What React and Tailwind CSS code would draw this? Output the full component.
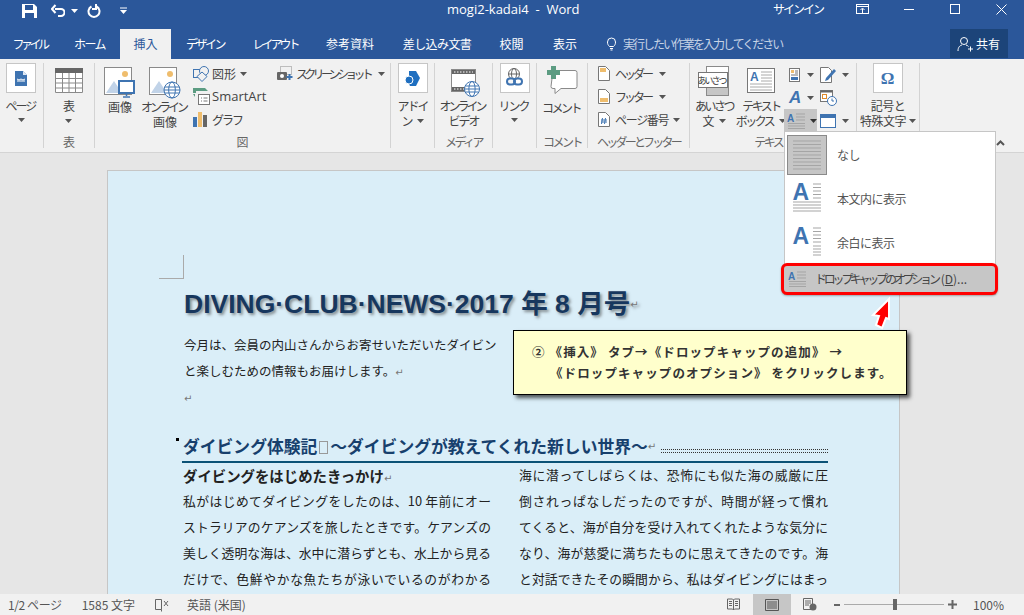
import React from 'react';

const JP = { fontFamily: '"Noto Sans CJK JP", "Noto Sans", sans-serif' };

const Caret = ({ className = '', color = '#555' }) => (
  <svg width="7" height="4" viewBox="0 0 7 4" className={`inline-block shrink-0 ${className}`}>
    <polygon points="0,0 7,0 3.5,4" fill={color} />
  </svg>
);

const Group = ({ w, label, children, labelClass = '' }) => (
  <div className="flex flex-col h-[85px] mt-[4px] border-r border-[#d3d3d3] shrink-0" style={{ width: w }}>
    <div className="flex-1 min-h-0 flex">{children}</div>
    <div className={`h-[20px] pt-[7px] text-center text-[12px] leading-[14px] text-[#666] whitespace-nowrap ${labelClass}`}>{label}</div>
  </div>
);

const Boxed = ({ children }) => (
  <div className="w-[30px] h-[30px] bg-white border border-[#c6c6c6] flex items-center justify-center">{children}</div>
);

// large ribbon button: icon block, then text lines
const Big = ({ w, h = 35, icon, children, className = '' }) => (
  <div className={`flex flex-col items-center shrink-0 ${className}`} style={{ width: w }}>
    <div className="flex justify-center items-start" style={{ height: h }}>{icon}</div>
    <div className="flex flex-col items-center text-[12px] leading-[15px] text-[#444] whitespace-nowrap">{children}</div>
  </div>
);

const Row = ({ icon, children, className = '' }) => (
  <div className={`h-[23px] flex items-center text-[12px] text-[#444] whitespace-nowrap ${className}`}>
    {icon}
    {children}
  </div>
);

const PageDoc = () => (
  <svg width="12" height="15" viewBox="0 0 12 15">
    <path d="M0 0h8l4 4v11H0z" fill="#3f74b1" />
    <path d="M8 0l4 4H8z" fill="#dfe8f3" />
    <path d="M2 10h8M2 8l2 1 2-1 2 1 2-1" stroke="#fff" strokeWidth="1" fill="none" />
  </svg>
);

const TableIcon = () => (
  <svg width="28" height="25" viewBox="0 0 28 25">
    <rect width="28" height="25" fill="#fff" />
    <rect width="28" height="5" fill="#666" />
    <path d="M.5 5v19.5h27V5M.5 10.5h27M.5 15h27M.5 20h27M7.5 5v20M14 5v20M20.5 5v20" stroke="#8a8a8a" fill="none" />
  </svg>
);

const PictureBase = () => (
  <>
    <rect x=".5" y=".5" width="27" height="27" fill="#fff" stroke="#8a8a8a" />
    <circle cx="21" cy="7" r="3" fill="#efbd6d" />
    <path d="M2 26l8-12 8 12z" fill="#c1d3e8" />
  </>
);

const PictureIcon = () => (
  <svg width="32" height="32" viewBox="0 0 32 32">
    <PictureBase />
    <rect x="15" y="14" width="15" height="12" fill="#fff" stroke="#3f74b1" strokeWidth="2" />
    <path d="M22.5 26v3M19 30h7" stroke="#3f74b1" strokeWidth="1.5" />
  </svg>
);

const Globe = ({ x, y, r = 7 }) => (
  <g stroke="#3f74b1" fill="#fff" strokeWidth="1">
    <circle cx={x} cy={y} r={r} />
    <ellipse cx={x} cy={y} rx={r / 2.4} ry={r} fill="none" />
    <path d={`M${x - r} ${y}h${2 * r}M${x - r + 1} ${y - 3}h${2 * r - 2}M${x - r + 1} ${y + 3}h${2 * r - 2}`} fill="none" />
  </g>
);

const OnlinePicture = () => (
  <svg width="32" height="32" viewBox="0 0 32 32">
    <PictureBase />
    <Globe x={23} y={23} r={8} />
  </svg>
);

const ShapesIcon = () => (
  <svg width="16" height="16" viewBox="0 0 16 16" className="mr-[3px]">
    <rect x=".5" y="3.500" width="10" height="8" fill="none" stroke="#3f74b1" />
    <circle cx="11" cy="5" r="4.500" fill="#f1f1f1" stroke="#3f74b1" />
    <path d="M9 6l5 4.500-5 5-5-5z" fill="#f1f1f1" stroke="#3f74b1" />
  </svg>
);

const SmartArtIcon = () => (
  <svg width="17" height="17" viewBox="0 0 17 17" className="mr-[2px]">
    <path d="M0 0h12l3 3H3v2H0z" fill="#5c9c82" />
    <path d="M0 6l2 0 0 3z" fill="#5c9c82" />
    <rect x="5.500" y="6.500" width="11" height="10" fill="#fff" stroke="#777" />
    <path d="M8 10h1M8 13h1M10.500 10h4M10.500 13h4" stroke="#777" />
  </svg>
);

const ChartIcon = () => (
  <svg width="14" height="15" viewBox="0 0 14 15" className="mr-[5px]">
    <rect y="5" width="4" height="10" fill="#3f74b1" />
    <rect x="5" width="4" height="15" fill="#efbd6d" />
    <rect x="10" y="3" width="4" height="12" fill="#666" />
  </svg>
);

const ScreenshotIcon = () => (
  <svg width="16" height="15" viewBox="0 0 16 15" className="mr-[3px]">
    <rect x="3.500" y=".5" width="11" height="8" fill="none" stroke="#888" strokeDasharray="1 1" />
    <rect y="6" width="10" height="8" rx="1" fill="#666" />
    <circle cx="5" cy="10" r="2" fill="#fff" />
    <path d="M12.500 8v6M9.500 11h6" stroke="#3f74b1" strokeWidth="2" />
  </svg>
);

const AddinIcon = () => (
  <svg width="15" height="15" viewBox="0 0 15 15">
    <path d="M4 0h7l4 7-4 8H5l-1-2z" fill="#1f6fc0" />
    <circle cx="4" cy="9" r="4" fill="#1f6fc0" stroke="#fff" />
  </svg>
);

const VideoIcon = () => (
  <svg width="29" height="28" viewBox="0 0 29 28">
    <rect x=".5" y=".5" width="24" height="22" fill="#fff" stroke="#8a8a8a" />
    <rect x="1" y="1" width="23" height="4" fill="#666" />
    <rect x="1" y="18" width="23" height="4" fill="#666" />
    <path d="M3 3h19M3 20h19" stroke="#fff" strokeDasharray="1.500 1.500" />
    <Globe x={21} y={20} r={7.500} />
  </svg>
);

const LinkIcon = () => (
  <svg width="17" height="20" viewBox="0 0 17 20">
    <g stroke="#666" fill="none">
      <circle cx="8" cy="6" r="5.500" />
      <ellipse cx="8" cy="6" rx="2.500" ry="5.500" />
      <path d="M2.500 6h11" />
    </g>
    <rect x="1" y="10.500" width="8" height="6" rx="3" fill="#f6f6f6" stroke="#3f74b1" strokeWidth="2" />
    <rect x="8" y="10.500" width="8" height="6" rx="3" fill="none" stroke="#3f74b1" strokeWidth="2" />
  </svg>
);

const CommentIcon = () => (
  <svg width="31" height="29" viewBox="0 0 31 29">
    <path d="M6 4.500h22a2 2 0 0 1 2 2v14a2 2 0 0 1-2 2H14l-6 5v-5H6a2 2 0 0 1-2-2z" fill="#fff" stroke="#8a8a8a" />
    <path d="M4 0h5v4h4v5H9v4H4V9H0V4h4z" fill="#5c9c82" />
  </svg>
);

const DocSmall = ({ band, hash }) => (
  <svg width="12" height="15" viewBox="0 0 12 15" className="mr-[5px]">
    <path d="M.5.5h7l4 4v10H.5z" fill="#fff" stroke="#777" />
    {band === 'top' && <rect x="2" y="2" width="6" height="4" fill="#efbd6d" />}
    {band === 'bottom' && <rect x="2" y="9" width="8" height="4" fill="#efbd6d" />}
    {hash && <path d="M4.500 6l-1 6M7.500 6l-1 6M3 8h6M3 10h6" stroke="#3f74b1" />}
  </svg>
);

const GreetIcon = () => (
  <div className="relative w-[33px] h-[30px]">
    <div className="absolute left-[8px] top-0 w-[23px] h-[30px] bg-white border border-[#8a8a8a] flex flex-col justify-end">
      <div className="h-[9px] bg-[#c6c6c6]" />
    </div>
    <div className="absolute left-0 top-[6px] w-[30px] h-[16px] bg-white border border-[#777] flex items-center justify-center text-[9px] leading-none text-[#333] tracking-[-2px] pr-[2px] whitespace-nowrap">あいさつ</div>
  </div>
);

const TextBoxIcon = () => (
  <svg width="28" height="25" viewBox="0 0 28 25">
    <rect x=".5" y=".5" width="27" height="24" fill="#fff" stroke="#777" />
    <text x="3" y="13" fontSize="12" fontWeight="700" fontFamily="Liberation Sans" fill="#3f74b1">A</text>
    <path d="M14 4h11M14 7h11M14 10h11M14 13h11M3 16h22M3 19h22M3 22h22" stroke="#aaa" />
  </svg>
);

const DropCapIcon = () => (
  <svg width="19" height="16" viewBox="0 0 19 16">
    <text x="0" y="9" fontSize="10" fontWeight="700" fontFamily="Liberation Sans" fill="#3f74b1">A</text>
    <path d="M9 1h9M9 4h9M9 7h9M1 10.500h17M1 13h17M1 15.500h17" stroke="#a5a5a5" />
  </svg>
);

const SmallIconGrid = () => (
  <div className="flex relative">
    <div className="w-[33px]">
      <div className="h-[23px] flex items-center pl-[5px] gap-[7px]">
        <svg width="11" height="14" viewBox="0 0 11 14">
          <rect x=".5" y=".5" width="10" height="13" fill="#fff" stroke="#777" />
          <rect x="2" y="2" width="3" height="3" fill="#efbd6d" />
          <path d="M6 3h3M6 5h3M2 7h7" stroke="#777" />
          <rect x="2" y="9" width="7" height="3" fill="#3f74b1" />
        </svg>
        <Caret />
      </div>
      <div className="h-[23px] flex items-center pl-[5px] gap-[6px]">
        <span className="w-[12px] text-[17px] leading-none font-bold italic text-[#3f74b1]" style={{ fontFamily: 'Liberation Sans' }}>A</span>
        <Caret />
      </div>
      <div className="h-[23px] flex items-center pl-[3px] gap-[4px] bg-[#c6c6c6] w-[33px]">
        <DropCapIcon />
        <Caret color="#333" />
      </div>
    </div>
    <div className="w-[36px] pl-[3px]">
      <div className="h-[23px] flex items-center gap-[5px]">
        <svg width="17" height="16" viewBox="0 0 17 16">
          <path d="M.5 .5h8l3 3v12H.5z" fill="#fff" stroke="#777" />
          <path d="M6 11l-1 3 3-1 8-9-2-2z" fill="#3f74b1" />
        </svg>
        <Caret />
      </div>
      <div className="h-[23px] flex items-center">
        <svg width="17" height="16" viewBox="0 0 17 16">
          <rect x=".5" y=".5" width="12" height="11" fill="#fff" stroke="#777" />
          <rect x=".5" y=".5" width="12" height="2" fill="#666" />
          <rect x="2.500" y="4.500" width="4" height="4" fill="none" stroke="#e08a2b" />
          <circle cx="12" cy="11" r="4.500" fill="#fff" stroke="#3f74b1" />
          <path d="M12 8.500V11h2" stroke="#3f74b1" fill="none" />
        </svg>
      </div>
      <div className="h-[23px] flex items-center gap-[5px]">
        <svg width="17" height="14" viewBox="0 0 17 14">
          <rect x=".5" y=".5" width="15" height="13" fill="#fff" stroke="#3f74b1" />
          <rect x="1" y="1" width="14" height="3" fill="#3f74b1" />
        </svg>
        <Caret />
      </div>
    </div>
  </div>
);

const Omega = () => (
  <span className="text-[17px] font-bold leading-none text-[#3f74b1]" style={{ fontFamily: 'Liberation Serif' }}>Ω</span>
);

const Ribbon = () => (
  <div className="h-[94px] bg-[#f1f1f1] border-b border-[#d4d4d4] flex shrink-0 relative" style={JP}>
    <Group w={44} label="">
      <Big w={43} icon={<div className="-ml-[1px]"><Boxed><PageDoc /></Boxed></div>}>
        <span className="tracking-[-2px] pr-[2px]">ページ</span>
        <Caret className="mt-[5px]" />
      </Big>
    </Group>
    <Group w={51} label="表">
      <Big w={50} icon={<div className="mt-[5px]"><TableIcon /></div>}>
        <span>表</span>
        <Caret className="mt-[6px]" />
      </Big>
    </Group>
    <Group w={296} label="図">
      <Big w={50} icon={<div className="mt-[4px]"><PictureIcon /></div>} h={36}>
        <span>画像</span>
      </Big>
      <Big w={40} icon={<div className="mt-[4px]"><OnlinePicture /></div>} h={36}>
        <span className="tracking-[-3px] pr-[3px]">オンライン</span>
        <span>画像</span>
      </Big>
      <div className="pl-[8px] w-[92px] -mt-[1px]">
        <Row icon={<ShapesIcon />}>
          <span className="mr-[4px]">図形</span><Caret />
        </Row>
        <Row icon={<SmartArtIcon />}>
          <span style={{ fontFamily: 'Open Sans' }} className="text-[13px]">SmartArt</span>
        </Row>
        <Row icon={<ChartIcon />}><span className="tracking-[-2px]">グラフ</span></Row>
      </div>
      <Row className="-mt-[1px]" icon={<ScreenshotIcon />}>
        <span className="tracking-[-3.700px] mr-[8px]">スクリーンショット</span><Caret />
      </Row>
    </Group>
    <Group w={44} label="">
      <Big w={43} icon={<Boxed><AddinIcon /></Boxed>}>
        <span className="tracking-[-2px]">アドイ</span>
        <span className="flex items-center gap-[3px]">ン<Caret /></span>
      </Big>
    </Group>
    <Group w={58} label={<span className="tracking-[-2.500px]">メディア</span>}>
      <Big w={57} h={37} icon={<div className="mt-[6px] ml-[4px]"><VideoIcon /></div>}>
        <span className="tracking-[-3px] pr-[3px]">オンライン</span>
        <span className="tracking-[-2px]">ビデオ</span>
      </Big>
    </Group>
    <Group w={44} label="">
      <Big w={43} icon={<Boxed><LinkIcon /></Boxed>}>
        <span className="tracking-[-2px] pr-[2px]">リンク</span>
        <Caret className="mt-[5px]" />
      </Big>
    </Group>
    <Group w={51} label={<span className="tracking-[-2.500px]">コメント</span>}>
      <Big w={50} h={37} icon={<div className="mt-[3px]"><CommentIcon /></div>}>
        <span className="tracking-[-2.500px] pr-[2px]">コメント</span>
      </Big>
    </Group>
    <Group w={102} label={<span className="tracking-[-2.800px]">ヘッダーとフッター</span>}>
      <div className="pl-[10px] -mt-[1px]">
        <Row icon={<DocSmall band="top" />}>
          <span className="tracking-[-3px] mr-[8px]">ヘッダー</span><Caret />
        </Row>
        <Row icon={<DocSmall band="bottom" />}>
          <span className="tracking-[-3px] mr-[8px]">フッター</span><Caret />
        </Row>
        <Row icon={<DocSmall hash />}>
          <span className="tracking-[-1.300px] mr-[5px]">ページ番号</span><Caret />
        </Row>
      </div>
    </Group>
    <Group w={167} label={<span className="tracking-[-2.500px]">テキスト</span>}>
      <Big w={48} h={37} icon={<div className="mt-[3px]"><GreetIcon /></div>}>
        <span className="tracking-[-2.500px]">あいさつ</span>
        <span className="flex items-center gap-[4px]">文<Caret /></span>
      </Big>
      <Big w={46} h={37} icon={<div className="mt-[5px]"><TextBoxIcon /></div>}>
        <span className="tracking-[-2.500px]">テキスト</span>
        <span className="tracking-[-2.500px] flex items-center gap-[6px]">ボックス<Caret /></span>
      </Big>
      <SmallIconGrid />
    </Group>
    <Group w={63} label="">
      <Big w={62} icon={<div className="-ml-[1px]"><Boxed><Omega /></Boxed></div>}>
        <span className="tracking-[-0.500px]">記号と</span>
        <span className="tracking-[-0.500px] flex items-center gap-[3px]">特殊文字<Caret /></span>
      </Big>
    </Group>
    <svg width="9" height="6" viewBox="0 0 9 6" className="absolute left-[996px] top-[81px]">
      <path d="M1 5l3.500-3.500L8 5" fill="none" stroke="#555" strokeWidth="2" />
    </svg>
  </div>
);

const TitleBar = () => (
  <div className="h-[29px] flex items-start pt-[4px] relative text-white shrink-0" style={JP}>
    <svg width="15" height="14" viewBox="0 0 15 14" className="ml-[22px]">
      <path d="M0 0h12l3 3v11H0z" fill="#fff" />
      <rect x="3" y="1" width="8" height="5" fill="#2b579a" />
      <rect x="3" y="9" width="9" height="5" fill="#2b579a" />
    </svg>
    <svg width="14" height="13" viewBox="0 0 14 13" className="ml-[14px]">
      <path d="M4 5h6a3.500 3.500 0 0 1 0 7H7M4.500 1L1 5l3.500 4" fill="none" stroke="#fff" strokeWidth="2" />
    </svg>
    <Caret color="#fff" className="ml-[6px] mt-[5px]" />
    <svg width="14" height="14" viewBox="0 0 14 14" className="ml-[9px]">
      <path d="M9.500 2.500a5.500 5.500 0 1 1-5 0M9 0v5H5" fill="none" stroke="#fff" strokeWidth="2" />
    </svg>
    <svg width="7" height="7" viewBox="0 0 7 7" className="ml-[19px] mt-[3px]">
      <path d="M0 1h7" stroke="#fff" />
      <polygon points="0,3 7,3 3.500,7" fill="#fff" />
    </svg>
    <div className="absolute left-[447px] top-0 text-[13px] leading-[18px] whitespace-pre" style={{ fontFamily: 'Open Sans' }}>mogi2-kadai4  -  Word</div>
    <div className="absolute left-[773px] top-0 text-[12px] leading-[18px] tracking-[-2px]">サインイン</div>
    <svg width="14" height="11" viewBox="0 0 14 11" className="absolute left-[856px] top-[4px]">
      <rect x=".5" y=".5" width="12" height="9" fill="none" stroke="#fff" />
      <path d="M1 2.500h11" stroke="#fff" />
      <path d="M6.500 9V4.500M4.500 6l2-2 2 2" stroke="#fff" fill="none" />
    </svg>
    <div className="absolute left-[904px] top-[9px] w-[10px] h-px bg-white" />
    <div className="absolute left-[950px] top-[4px] w-[10px] h-[10px] border border-white" />
    <svg width="11" height="11" viewBox="0 0 11 11" className="absolute left-[996px] top-[4px]">
      <path d="M.5.5l10 10M10.500.5l-10 10" stroke="#fff" />
    </svg>
  </div>
);

const tabs = [
  { label: 'ファイル', w: 59, cls: 'tracking-[-3.500px]' },
  { label: 'ホーム', w: 61, cls: 'tracking-[-1.500px]' },
  { label: '挿入', w: 51, active: true },
  { label: 'デザイン', w: 68, cls: 'tracking-[-2.500px]' },
  { label: 'レイアウト', w: 72, cls: 'tracking-[-3px]' },
  { label: '参考資料', w: 78 },
  { label: '差し込み文書', w: 96, cls: 'tracking-[-0.600px]' },
  { label: '校閲', w: 53 },
  { label: '表示', w: 54 },
];

const TabBar = () => (
  <div className="h-[30px] flex relative shrink-0 text-[12px]" style={JP}>
    {tabs.map((t) => (
      <div
        key={t.label}
        className={`flex items-center justify-center whitespace-nowrap ${t.active ? 'bg-[#f1f1f1] text-[#2b579a]' : 'text-white'} ${t.cls || ''}`}
        style={{ width: t.w }}
      >
        {t.label}
      </div>
    ))}
    <div className="flex items-center ml-[15px] text-[#c5d2e5]">
      <svg width="9" height="14" viewBox="0 0 9 14" className="mr-[7px]">
        <path d="M2.500 9.500C1 8 .5 7 .5 5a4 4 0 0 1 8 0c0 2-.5 3-2 4.500zM3 11.500h3M3.500 13h2" fill="none" stroke="#fff" />
      </svg>
      <span className="tracking-[-2px]">実行したい作業を入力してください</span>
    </div>
    <div className="absolute left-[950px] top-0 w-[58px] h-[29px] bg-[#1c4479] text-white flex items-center pl-[7px]">
      <svg width="16" height="16" viewBox="0 0 16 16" className="mr-[3px]">
        <circle cx="7" cy="5" r="3.500" fill="none" stroke="#fff" />
        <path d="M1 15c0-4 2-5.500 4-6M9 9c1 .3 2 .8 2.500 1.500M11 13h5M13.500 10.500v5" fill="none" stroke="#fff" />
      </svg>
      <span>共有</span>
    </div>
  </div>
);

const Return = () => (
  <span className="text-[#777] text-[10px] font-normal leading-none" style={{ fontFamily: 'DejaVu Sans' }}>↵</span>
);

const leftCol = [
  '私がはじめてダイビングをしたのは、10 年前にオー',
  'ストラリアのケアンズを旅したときです。ケアンズの',
  '美しく透明な海は、水中に潜らずとも、水上から見る',
  'だけで、色鮮やかな魚たちが泳いでいるのがわかる',
];
const rightCol = [
  '海に潜ってしばらくは、恐怖にも似た海の威厳に圧',
  '倒されっぱなしだったのですが、時間が経って慣れ',
  'てくると、海が自分を受け入れてくれたような気分に',
  'なり、海が慈愛に満ちたものに思えてきたのです。海',
  'と対話できたその瞬間から、私はダイビングにはまっ',
];

const Page = () => (
  <div className="ml-[107px] mt-[17px] w-[793px] h-[500px] bg-[#daeef8] border border-[#c6c6c6] text-[#222] shrink-0" style={JP}>
    <div className="ml-[51px] mt-[84px] w-[25px] h-[24px] border-r border-b border-[#aaa]" />
    <div
      className="ml-[76px] mt-[8px] h-[36px] flex items-center whitespace-pre text-[26.500px] font-bold text-[#17375e] [text-shadow:2px_2px_3px_rgba(60,60,60,0.55)]"
      style={{ fontFamily: '"Liberation Sans", "Noto Sans CJK JP", sans-serif' }}
    >
      DIVING·CLUB·NEWS·2017 年 8 月号<Return />
    </div>
    <div className="ml-[76px] mt-[9px] text-[12.500px] leading-[26px] whitespace-nowrap">
      <div>今月は、会員の内山さんからお寄せいただいたダイビン</div>
      <div>と楽しむための情報もお届けします。<Return /></div>
      <div className="h-[27px]"><Return /></div>
    </div>
    <div className="ml-[74px] w-[646px] mt-[24px] relative">
      <div className="absolute -left-[6px] top-[3px] w-[3px] h-[3px] bg-black" />
      <div className="h-[28px] pl-[1px] pb-[2px] flex items-center border-b-2 border-[#0b5276] text-[16.800px] font-bold text-[#17406d] whitespace-nowrap">
        ダイビング体験記
        <span className="inline-block w-[9px] h-[13px] mx-[2px] border border-[#999]" />
        ～ダイビングが教えてくれた新しい世界～<Return />
        <span className="flex-1 ml-[5px] h-[4px] mt-[8px] border-y border-dotted border-[#333]" />
      </div>
      <div className="flex text-[12.800px] whitespace-nowrap">
        <div className="w-[337px] pl-[1px] leading-[26px]">
          <div className="h-[25px] text-[14.400px] font-bold">ダイビングをはじめたきっかけ<Return /></div>
          {leftCol.map((l) => <div key={l} className="w-[308px] whitespace-normal [text-align:justify] [text-align-last:justify]">{l}</div>)}
        </div>
        <div className="leading-[26px] -mt-[1px]">
          {rightCol.map((l) => <div key={l} className="w-[309px] whitespace-normal [text-align:justify] [text-align-last:justify]">{l}</div>)}
        </div>
      </div>
    </div>
  </div>
);

const StatusBar = () => (
  <div className="h-[21px] bg-[#f1f1f1] flex items-center relative shrink-0 text-[12px] text-[#555]" style={JP}>
    <span className="ml-[8px] tracking-[-0.400px]">1/2 ページ</span>
    <span className="ml-[20px]">1585 文字</span>
    <svg width="14" height="14" viewBox="0 0 14 14" className="ml-[20px]">
      <path d="M6.500 1.500H.5v10h6v2M6.500 1.500v10" fill="none" stroke="#666" />
      <path d="M9 3l4 5M13 3L9 8" stroke="#666" />
    </svg>
    <span className="ml-[18px]">英語 (米国)</span>
    <div className="absolute left-[727px] top-0 h-full flex items-center">
      <svg width="13" height="13" viewBox="0 0 13 13">
        <path d="M.5 1h5l1 1 1-1h5v10h-5l-1 1-1-1h-5zM6.500 2v10M2 3.500h3M2 5.500h3M2 7.500h3M8 3.500h3M8 5.500h3M8 7.500h3" fill="none" stroke="#666" />
      </svg>
      <div className="ml-[13px] w-[38px] h-[21px] bg-[#c6c6c6] flex items-center justify-center">
        <svg width="14" height="12" viewBox="0 0 14 12">
          <path d="M.5.5h13v11H.5zM2 3h10M2 5h10M2 7h10M2 9h10" fill="none" stroke="#555" />
        </svg>
      </div>
      <svg width="14" height="13" viewBox="0 0 14 13" className="ml-[12px]">
        <path d="M.5.5h9v11H.5zM2 3h6M2 5h6M2 7h4" fill="none" stroke="#666" />
        <circle cx="10" cy="9" r="3.500" fill="#666" />
      </svg>
      <div className="ml-[17px] w-[6px] h-[2px] bg-[#666]" />
      <div className="ml-[4px] w-[100px] h-px bg-[#aaa] relative">
        <div className="absolute left-[49px] -top-[5px] w-[4px] h-[11px] bg-[#666]" />
      </div>
      <svg width="9" height="9" viewBox="0 0 9 9" className="ml-[4px]">
        <path d="M0 4.500h9M4.500 0v9" stroke="#666" strokeWidth="2" />
      </svg>
      <span className="ml-[16px] text-[#555]">100%</span>
    </div>
  </div>
);

const MenuItem = ({ children, label, className = '' }) => (
  <div className={`h-[44px] flex items-center ${className}`}>
    <div className="w-[52px] pl-[2px] flex justify-start shrink-0">{children}</div>
    <span className="text-[12px] text-[#555] tracking-[-0.500px]">{label}</span>
  </div>
);

const LinesThumb = ({ type }) => (
  <svg width="40" height="40" viewBox="0 0 40 40">
    {type === 'none' && (
      <>
        <rect x=".5" y=".5" width="39" height="39" fill="#c6c6c6" stroke="#8a8a8a" />
        <path d="M6 6h28M6 9.500h28M6 13h28M6 16.500h28M6 20h28M6 23.500h28M6 27h28M6 30.500h28M6 34h28" stroke="#a5a5a5" />
      </>
    )}
    {type === 'in' && (
      <>
        <text x="5.500" y="21" fontSize="23" fontWeight="700" fontFamily="Liberation Sans" fill="#3f74b1">A</text>
        <path d="M26 5h8M26 8.500h8M26 12h8M26 15.500h8M26 19h8M6 23h28M6 26h28M6 29h28M6 32h28" stroke="#a5a5a5" />
      </>
    )}
    {type === 'margin' && (
      <>
        <text x="5.500" y="21" fontSize="23" fontWeight="700" fontFamily="Liberation Sans" fill="#3f74b1">A</text>
        <path d="M26 5h8M26 8.500h8M26 12h8M26 15.500h8M26 19h8M26 23h8M26 26h8M26 29h8M26 32h8" stroke="#a5a5a5" />
      </>
    )}
  </svg>
);

const DropMenu = () => (
  <div className="absolute left-[784px] top-[131px] w-[212px] h-[164px] bg-white border border-[#c6c6c6]" style={JP}>
    <MenuItem label="なし" className="mt-[1px]"><LinesThumb type="none" /></MenuItem>
    <MenuItem label="本文内に表示"><LinesThumb type="in" /></MenuItem>
    <MenuItem label="余白に表示"><LinesThumb type="margin" /></MenuItem>
    <div className="absolute -left-[4px] top-[131px] w-[217px] h-[32px] bg-[#c6c6c6] border-[3px] border-[#f00] rounded-[6px] flex items-center pl-[4px] shadow-[0_1px_2px_rgba(0,0,0,0.3)]">
      <DropCapIcon />
      <span className="ml-[8px] text-[12px] text-[#444] whitespace-pre">
        <span className="tracking-[-3.200px]">ドロップ キャップのオプション</span>
        <span className="ml-[3px]">(<span className="underline">D</span>)...</span>
      </span>
    </div>
  </div>
);

const Callout = () => (
  <div className="absolute left-[513px] top-[330px] w-[394px] h-[65px] bg-[#ffffcc] border border-black shadow-[3px_3px_4px_rgba(0,0,0,0.65)] text-[12.500px] leading-[21px] font-bold text-[#333] pl-[18px] pt-[10px] whitespace-pre tracking-[1.100px]" style={JP}>
    <div>② 《挿入》 タブ→《ドロップキャップの追加》 →</div>
    <div className="pl-[18px]">《ドロップキャップのオプション》 をクリックします。</div>
  </div>
);

const RedArrow = () => (
  <svg width="40" height="36" viewBox="0 0 40 36" className="absolute left-[860px] top-[295px]">
    <path d="M29 4L13 20l6 1-3 9 6 3 4-10 3 1z" fill="#f00" stroke="#fff" strokeWidth="2" />
  </svg>
);

export default function App() {
  return (
    <div className="w-[1024px] h-[615px] relative overflow-hidden bg-[#2b579a] flex flex-col">
      <TitleBar />
      <TabBar />
      <Ribbon />
      <div className="flex-1 min-h-0 bg-[#e6e6e6] overflow-hidden">
        <Page />
      </div>
      <StatusBar />
      <DropMenu />
      <RedArrow />
      <Callout />
    </div>
  );
}
